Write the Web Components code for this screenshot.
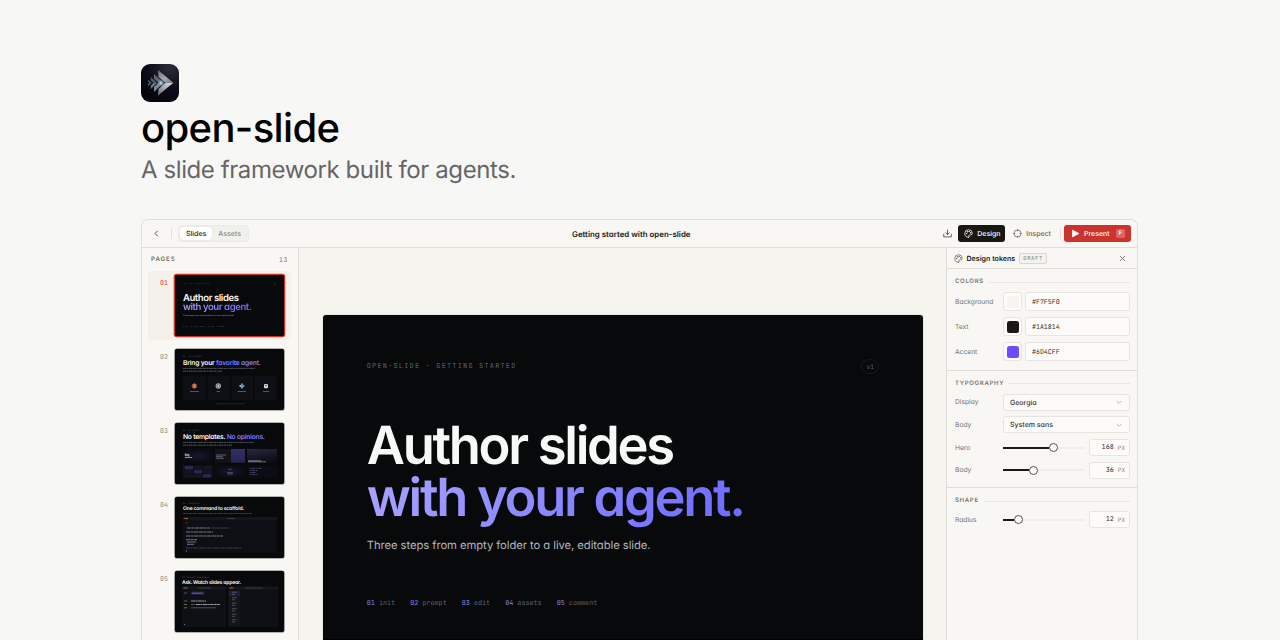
<!DOCTYPE html>
<html lang="en">
<head>
<meta charset="utf-8">
<title>open-slide</title>
<style>
  html, body { margin: 0; height: 100%; overflow: hidden; background: #f7f7f5; }
  body { font-family: Inter, "Liberation Sans", sans-serif; color: #1a1814; text-rendering: geometricPrecision; }
</style>
</head>
<body>
<social-card>
  <brand-mark slot="logo"></brand-mark>
  <span slot="name">open-slide</span>
  <span slot="tagline">A slide framework built for agents.</span>
  <editor-window>
    <editor-bar slot="bar">Getting started with open-slide</editor-bar>
    <page-list slot="pages">
      <page-thumb num="01" active><intro-slide></intro-slide></page-thumb>
      <page-thumb num="02"><svg viewBox="0 0 109 61" width="109" height="61">
        <text x="8" y="8" font-size="1.7" letter-spacing=".3" fill="#666a73">02 · YOUR AGENT</text>
        <text x="8" y="15.8" font-size="6.7" font-weight="600" fill="#f7f8f8" textLength="78">Bring your <tspan fill="#7f7bff">favorite agent.</tspan></text>
        <g stroke="#8a8f98" stroke-width=".7" stroke-dasharray="3 .5 1.6 .5 4 .5" opacity=".75"><path d="M8 19.4h72M8 22.2h39"/></g>
        <g fill="#0e0f14"><path d="M8 26.5h22.7v24.5H8zM32.7 26.5h22v24.5h-22zM56.5 26.5h21.8v24.5H56.5zM80 26.5h22v24.5H80z"/></g>
        <g stroke="#d97757" stroke-width="1.2"><path d="M16.7 37h5.4M19.4 34.3v5.4M17.5 35.1l3.8 3.8M21.3 35.1l-3.8 3.8"/></g>
        <circle cx="43.3" cy="37" r="2.7" fill="#b4b7bb"/><path d="M41.8 36l1.5-1 1.5 1v2l-1.5 1-1.5-1z" fill="none" stroke="#42454a" stroke-width=".6"/>
        <path d="M67 34l1.3 1.7 1.7 1.3-1.7 1.3-1.3 1.7-1.3-1.7-1.7-1.3 1.7-1.3z" fill="#4a9de8"/><path d="M67 34l1 1.8h-2z" fill="#e8574f"/><path d="M64 37l1.8-1v2z" fill="#e8c14a"/><path d="M67 40l1-1.8h-2z" fill="#4cb377"/>
        <rect x="89" y="35" width="4" height="4.2" rx="1" fill="#d6d7d9"/><path d="M90 36.6h2" stroke="#333" stroke-width=".8"/>
        <g stroke="#8a8f98" stroke-width=".7" opacity=".8"><path d="M15 42.5h9M41.5 42.5h3.6M62.5 42.5h8.5M88 42.5h6.3"/></g>
        <path d="M41 54.8h29" stroke="#555963" stroke-width=".6" stroke-dasharray="2 .5 3 .5" opacity=".7"/>
      </svg></page-thumb>
      <page-thumb num="03"><svg viewBox="0 0 109 61" width="109" height="61">
        <defs>
          <linearGradient id="a" x2="0" y2="1"><stop stop-color="#32316a"/><stop offset="1" stop-color="#25244f"/></linearGradient>
          <linearGradient id="b" x2=".3" y2="1"><stop stop-color="#282743"/><stop offset="1" stop-color="#0d0d15"/></linearGradient>
          <radialGradient id="c"><stop stop-color="#181531"/><stop offset="1" stop-color="#0b0c12"/></radialGradient>
        </defs>
        <text x="8" y="8" font-size="1.7" letter-spacing=".3" fill="#666a73">03 · NO LIMITS</text>
        <text x="8" y="15.6" font-size="6.7" font-weight="600" fill="#f7f8f8" textLength="82">No templates. <tspan fill="#7f7bff">No opinions.</tspan></text>
        <g stroke="#8a8f98" stroke-width=".7" stroke-dasharray="3 .5 1.6 .5 4 .5" opacity=".75"><path d="M8 19.4h71M8 22.2h49"/></g>
        <path d="M8 26h29.5v13.7H8z" fill="url(#c)"/><path d="M40 26h16v13.7H40z" fill="#11121a"/><path d="M56 26h14v13.7H56z" fill="url(#a)"/><path d="M72 26h30v13.7H72z" fill="url(#b)"/>
        <text x="9.8" y="32.6" font-size="3" font-weight="600" fill="#eee">Big</text><path d="M10 34.5h7" stroke="#8580ff" stroke-width="1.2"/>
        <path d="M41 32h10M41 33.7h7M41 35.3h8" stroke="#7d8090" stroke-width=".7"/><path d="M73 37.8h13M73 38.8h18" stroke="#b8b8c5" stroke-width=".6"/>
        <path d="M8 42.4h29.5v12.4H8z" fill="#15161d"/><path d="M10 43h8v3.5h-8zM19 47h8v3.5h-8zM28 51h8v3.5h-8z" fill="#272858"/>
        <path d="M8 46.7h29.5M8 50.7h29.5M18.5 42.4v12.4M27.6 42.4v12.4" stroke="#090a0e" stroke-width=".5"/>
        <path d="M40 42.4h30v12.4H40z" fill="url(#c)"/><path d="M53.5 46.3h3M52 49.7h6M52.5 51h5" stroke="#777a88" stroke-width=".6"/>
        <path d="M72 42.4h30v12.4H72z" fill="#0c0d13"/><path d="M75 45.3h12M75 47.5h8M75 49.5h6M75 51.5h8" stroke="#656789" stroke-width=".6" stroke-dasharray="1.5 .6 3 .6"/>
      </svg></page-thumb>
      <page-thumb num="04"><svg viewBox="0 0 109 61" width="109" height="61">
        <text x="8" y="7.2" font-size="1.7" letter-spacing=".3" fill="#666a73">04 · SCAFFOLD</text>
        <text x="8" y="13.3" font-size="5.1" font-weight="600" fill="#f7f8f8" textLength="61">One command to scaffold.</text>
        <path d="M8 16.4h69" stroke="#777b84" stroke-width=".6" stroke-dasharray="3 .5 1.6 .5 4 .5" opacity=".8"/>
        <path d="M8 20h94v35.7H8z" fill="#0e0f14"/><path d="M8 20h94v3H8z" fill="#15161b"/>
        <path d="M9.3 21.5h1.3" stroke="#df554c"/><path d="M10.8 21.5h1" stroke="#caa03c"/><path d="M12 21.5h1" stroke="#3d9f4b"/><path d="M52 21.5h8" stroke="#50535b" stroke-width=".6"/>
        <path d="M11 26h1" stroke="#46785c" stroke-width="1.2"/>
        <g stroke="#a7a9af" stroke-width=".9" stroke-dasharray="4 .5 2.5 .5 5 .5" opacity=".75"><path d="M12 31h23M11 35h27M11 39h37M11 42.7h11"/></g>
        <path d="M36 31h18" stroke="#555963" stroke-width=".6"/><path d="M12 45h9M12 47.3h7" stroke="#7774bb" stroke-width=".9"/>
        <path d="M11 51h56" stroke="#5d606a" stroke-width=".6" stroke-dasharray="4 .5 2 .5"/><path d="M11 54h1" stroke="#a7a9af" stroke-width=".8"/>
      </svg></page-thumb>
      <page-thumb num="05"><svg viewBox="0 0 109 61" width="109" height="61">
        <text x="7" y="6.6" font-size="1.7" letter-spacing=".3" fill="#666a73">05 · PROMPT THE AGENT</text>
        <text x="7" y="12.9" font-size="5.1" font-weight="600" fill="#f7f8f8" textLength="59">Ask. Watch slides appear.</text>
        <path d="M7 15.5h44V56H7zM53 15.5h50V56H53z" fill="#0f1015"/><path d="M7 15.5h44v3H7zM53 15.5h50v3H53z" fill="#16171c"/>
        <path d="M8.5 17h1.3M54.5 17h1.3" stroke="#df554c"/><path d="M10.2 17h1M56.2 17h1" stroke="#caa03c"/><path d="M11.5 17h1M57.5 17h1" stroke="#3d9f4b"/>
        <path d="M23 17h13M70 17h18" stroke="#50535b" stroke-width=".6"/>
        <path d="M16 20.6h13.5v3.2H16z" fill="#222344"/><path d="M17 22.2h11" stroke="#8583da" stroke-width=".7"/><path d="M9 22h3M9 30h3.5" stroke="#666a90" stroke-width=".8"/>
        <path d="M16 30h15M21 33.5h24" stroke="#b9bbc2" stroke-width=".8" stroke-dasharray="4 .4 2 .4"/><path d="M16 33.5h4M16 36.8h25" stroke="#6b6e77" stroke-width=".7"/><path d="M9 33.5h3M9 36.8h3" stroke="#8b7d43" stroke-width=".8"/><path d="M9 53.5h.8" stroke="#8583da" stroke-width="1.2"/>
        <path d="M53.7 19.5H65v36H53.7z" fill="#14151b"/><path d="M54 20h11v5H54z" fill="#1d1e3b"/>
        <path d="M57 21.2h4.5M57 23.3h3M57 26.7h4.5M57 28.8h3M57 32.2h4.5M57 34.3h3M57 37.7h4.5M57 39.8h3M57 43.2h4.5M57 45.3h3M57 48.7h4.5M57 50.8h3" stroke="#73767f" stroke-width=".6"/>
      </svg></page-thumb>
    </page-list>
    <intro-slide slot="stage" large></intro-slide>
    <design-panel slot="panel">
      <token-group label="Colors">
        <color-row label="Background" value="#F7F5F0"></color-row>
        <color-row label="Text" value="#1A1814"></color-row>
        <color-row label="Accent" value="#6D4CFF"></color-row>
      </token-group>
      <token-group label="Typography">
        <select-row label="Display" value="Georgia"></select-row>
        <select-row label="Body" value="System sans"></select-row>
        <range-row label="Hero" value="168" at="50"></range-row>
        <range-row label="Body" value="36" at="30"></range-row>
      </token-group>
      <token-group label="Shape">
        <range-row label="Radius" value="12" at="15"></range-row>
      </token-group>
    </design-panel>
  </editor-window>
</social-card>

<script>
const MONO = '"JetBrains Mono", "Liberation Mono", monospace'

const PALETTE = `<svg viewBox="0 0 24 24" fill="none" stroke="currentColor" stroke-width="2" stroke-linecap="round" stroke-linejoin="round">
  <path d="M12 22a1 1 0 0 1 0-20 10 9 0 0 1 10 9 5 5 0 0 1-5 5h-2.25a1.75 1.75 0 0 0-1.4 2.8l.3.4a1.75 1.75 0 0 1-1.4 2.8z"/>
  <circle cx="13.5" cy="6.5" r=".7"/><circle cx="17.5" cy="10.5" r=".7"/><circle cx="6.5" cy="12.5" r=".7"/><circle cx="8.5" cy="7.5" r=".7"/></svg>`

// registers an element whose shadow root is built from markup(element)
function define (name, markup) {
  window.customElements.define(name, class extends HTMLElement {
    constructor () {
      super()
      this.attachShadow({ mode: 'open' })
    }

    connectedCallback () {
      const template = document.createElement('template')
      template.innerHTML = markup(this)
      this.shadowRoot.replaceChildren(template.content.cloneNode(true))
    }
  })
}

define('social-card', () => `
<style>
:host { display: block; box-sizing: border-box; height: 640px; overflow: hidden; padding: 64px 142px 0 141px; }
h1 { margin: 3px 0 0; font-size: 40px; line-height: 46px; font-weight: 500; letter-spacing: -.65px; color: #000; height: 46px; }
p { margin: 4px 0 0; font-size: 24px; line-height: 30px; height: 30px; letter-spacing: -.41px; color: #666; }
.window { margin-top: 34px; }
</style>
<slot name="logo"></slot>
<h1><slot name="name"></slot></h1>
<p><slot name="tagline"></slot></p>
<div class="window"><slot></slot></div>`)

define('brand-mark', () => `
<style>
:host { display: block; width: 38px; height: 38px; }
svg { display: block; }
</style>
<svg width="38" height="38" viewBox="0 0 38 38">
  <defs>
    <radialGradient id="bg" cx=".75" cy=".1" r=".9"><stop stop-color="#292c38"/><stop offset=".6" stop-color="#0d0e19"/><stop offset="1" stop-color="#04050d"/></radialGradient>
    <linearGradient id="top" x1="0" y1="0" x2="1" y2="1"><stop stop-color="#696b72"/><stop offset=".55" stop-color="#a8aab0"/><stop offset="1" stop-color="#777981"/></linearGradient>
    <linearGradient id="low" x1="1" y1="0" x2="0" y2="1"><stop stop-color="#e2e3e6"/><stop offset=".5" stop-color="#aaacb2"/><stop offset="1" stop-color="#666872"/></linearGradient>
    <radialGradient id="glow"><stop stop-color="#e4f1ff"/><stop offset=".4" stop-color="#9cb5d2" stop-opacity=".7"/><stop offset="1" stop-color="#7890b0" stop-opacity="0"/></radialGradient>
  </defs>
  <rect width="38" height="38" rx="9" fill="url(#bg)"/>
  <path d="M17 6l15.3 12.7h-8L17.5 13z" fill="url(#top)"/><path d="M17 31.5l15.3-12.8h-8L17.5 25z" fill="url(#low)"/>
  <path d="M13 10l9.5 8.7h-5L13 14.8z" fill="#5f6673"/><path d="M13 28l9.5-9.3h-5L13 22.7z" fill="#7d8591"/>
  <path d="M9.8 13l6.2 5.8h-3.5l-2.7-2.4z" fill="#555c69"/><path d="M9.8 25l6.2-6.2h-3.5l-2.7 2.6z" fill="#6f7784"/>
  <path d="M7 15.8l3.8 3-3.8 3.5v-2.2l1.3-1.3L7 17.7z" fill="#505764"/>
  <circle cx="20" cy="19" r="4" fill="url(#glow)"/>
</svg>`)

define('editor-window', () => `
<style>
:host {
  display: flex; flex-direction: column; box-sizing: border-box; width: 997px; height: 421px;
  border: 1px solid #e2e0dc; border-bottom: 0; border-radius: 7px 7px 0 0; background: #f8f7f3; overflow: hidden;
  font-feature-settings: "cv11";
}
.body { display: flex; flex: 1; min-height: 0; }
.stage { flex: 1; background: #f5f4ef; padding: 67px 0 0 24px; }
</style>
<slot name="bar"></slot>
<div class="body">
  <slot name="pages"></slot>
  <div class="stage"><slot name="stage"></slot></div>
  <slot name="panel"></slot>
</div>`)

define('editor-bar', () => `
<style>
:host {
  display: grid; grid-template-columns: 430px auto 1fr; align-items: center; box-sizing: border-box; flex: none;
  height: 28px; padding: 0 6px 0 0; border-bottom: 1px solid #dfddd9; font-size: 7px; font-weight: 500;
}
svg { display: block; width: 9px; height: 9px; flex: none; }
.group { display: flex; align-items: center; }
.start { padding-left: 10px; }
.end { justify-content: flex-end; }
.rule { width: 1px; height: 11px; background: #e2e0db; }
.tabs { display: flex; margin-left: 6px; padding: 1px; border: 1px solid #eceae5; border-radius: 4px; background: #f2f0ea; box-sizing: border-box; height: 17px; color: #8b8780; }
.tabs span { display: flex; align-items: center; padding: 0 6px; border-radius: 3px; }
.tabs .on { background: #fff; color: #1a1814; box-shadow: 0 0 1px #0003; }
.title { font-size: 7.9px; font-weight: 600; }
.button { display: flex; align-items: center; box-sizing: border-box; height: 17px; gap: 4px; border-radius: 3px; }
.dark { background: #1a1611; color: #fff; width: 47px; padding-left: 6px; margin-left: 6px; }
.inspect { padding: 0 9px 0 8px; color: #68645d; }
.present { background: #cc332e; color: #fff; width: 67px; padding-left: 7px; margin-left: 3px; }
kbd { font: 500 6px Inter; background: #dc6661; border-radius: 2px; width: 9px; line-height: 9px; text-align: center; margin-left: 2px; }
</style>
<div class="group start">
  <svg viewBox="0 0 24 24" fill="none" stroke="#4d4943" stroke-width="2.6"><path d="M15 5l-7 7 7 7"/></svg>
  <div class="rule" style="margin-left:10px"></div>
  <div class="tabs"><span class="on">Slides</span><span>Assets</span></div>
</div>
<div class="title"><slot></slot></div>
<div class="group end">
  <svg viewBox="0 0 24 24" fill="none" stroke="#4d4943" stroke-width="2.3" stroke-linecap="round" stroke-linejoin="round"><path d="M12 15V3M7 10l5 5 5-5M2 14v7h20v-7"/></svg>
  <div class="button dark">${PALETTE}Design</div>
  <div class="button inspect"><svg viewBox="0 0 24 24" fill="none" stroke="currentColor" stroke-width="2"><circle cx="12" cy="12" r="9.5"/><path d="M12 1v5M12 18v5M1 12h5M18 12h5"/></svg>Inspect</div>
  <div class="rule"></div>
  <div class="button present"><svg viewBox="0 0 24 24" fill="currentColor" stroke="currentColor" stroke-width="2" stroke-linejoin="round"><path d="M4 3l17 9-17 9z"/></svg>Present<kbd>F</kbd></div>
</div>`)

define('page-list', () => `
<style>
:host { display: flex; flex-direction: column; box-sizing: border-box; flex: none; width: 157px; padding: 0 7px 0 6px; border-right: 1px solid #dfddd9; }
header { display: flex; justify-content: space-between; align-items: center; flex: none; height: 23px; padding: 0 3px; font: 6.4px ${MONO}; color: #77736c; }
b { font: 600 6.2px Inter; letter-spacing: .9px; }
.list { display: flex; flex-direction: column; gap: 5px; }
</style>
<header><b>PAGES</b><span style="letter-spacing:.7px">13</span></header>
<div class="list"><slot></slot></div>`)

define('page-thumb', el => `
<style>
:host { display: flex; flex: none; box-sizing: border-box; height: 69px; padding: 4px 7px 4px 12px; border-radius: 3px; }
:host([active]) { background: #f3f0e9; }
.num { width: 15px; padding-top: 4px; font: 6.6px/8px ${MONO}; color: #8d8982; }
:host([active]) .num { color: #d3443f; }
.frame { width: 109px; height: 61px; border-radius: 2px; overflow: hidden; background: #08090b; box-shadow: 0 0 0 .6px #6b6b69; }
:host([active]) .frame { box-shadow: 0 0 0 1.3px #cc332e; }
</style>
<div class="num">${el.getAttribute('num')}</div>
<div class="frame"><slot></slot></div>`)

// the slide is laid out on a 1920x1080 canvas, --u is the size of one canvas pixel
define('intro-slide', () => `
<style>
:host {
  --u: .0568px; display: flex; flex-direction: column; box-sizing: border-box; width: calc(var(--u) * 1920); height: calc(var(--u) * 1080);
  padding: calc(var(--u) * 136) calc(var(--u) * 140) 0; background: #08090b; color: #f7f8f8; font-feature-settings: "cv11";
}
:host([large]) { --u: .3125px; border-radius: 3px; box-shadow: 0 0 1px #0008; background: linear-gradient(#08090b 96%, #000 0); }
header { display: flex; justify-content: space-between; align-items: center; height: calc(var(--u) * 58); font: calc(var(--u) * 22) ${MONO}; letter-spacing: calc(var(--u) * 3.95); color: #5f626a; }
.badge { display: flex; align-items: center; justify-content: center; width: calc(var(--u) * 58); height: calc(var(--u) * 50); border: calc(var(--u) * 2) solid #17181c; border-radius: 50%; letter-spacing: 0; font-size: calc(var(--u) * 20); box-sizing: border-box; }
h2 { margin: calc(var(--u) * 138) 0 0; font-size: calc(var(--u) * 168); line-height: 1; font-weight: 600; letter-spacing: calc(var(--u) * -7.4); white-space: nowrap; }
h2 span { display: block; width: max-content; }
.accent { padding-bottom: calc(var(--u) * 20); margin-bottom: calc(var(--u) * -20); background: linear-gradient(120deg, #a9a4ff, #6c69ff); background-clip: text; -webkit-background-clip: text; color: transparent; }
p { margin: calc(var(--u) * 44) 0 0; font-size: calc(var(--u) * 36); line-height: calc(var(--u) * 50); letter-spacing: calc(var(--u) * -.2); color: #b4b7bd; white-space: nowrap; }
footer { display: flex; gap: calc(var(--u) * 48); margin-top: calc(var(--u) * 146); font: calc(var(--u) * 21.7) ${MONO}; color: #5f626a; white-space: nowrap; }
i { font-style: normal; color: #8c87e8; }
</style>
<header><span>OPEN-SLIDE · GETTING STARTED</span><span class="badge">v1</span></header>
<h2><span>Author slides</span><span class="accent">with your agent.</span></h2>
<p>Three steps from empty folder to a live, editable slide.</p>
<footer><span><i>01</i> init</span><span><i>02</i> prompt</span><span><i>03</i> edit</span><span><i>04</i> assets</span><span><i>05</i> comment</span></footer>`)

define('design-panel', () => `
<style>
:host { display: block; box-sizing: border-box; flex: none; width: 191px; border-left: 1px solid #dfddd9; background: #f8f7f3; }
header { display: flex; align-items: center; box-sizing: border-box; height: 21px; padding: 0 10px 0 6.5px; border-bottom: 1px solid #dfddd9; color: #68645d; }
svg { width: 9px; height: 9px; }
b { margin: 0 4px 0 4px; font-size: 7.1px; font-weight: 600; color: #1a1814; }
.tag { padding: 0 3px; border: 1px solid #d9d6d0; border-radius: 2px; font: 5.6px/9px ${MONO}; letter-spacing: .6px; color: #87837c; background: #f4f2ed; }
.close { margin-left: auto; }
</style>
<header>${PALETTE}<b>Design tokens</b><span class="tag">DRAFT</span>
  <svg class="close" viewBox="0 0 24 24" fill="none" stroke="currentColor" stroke-width="2.2"><path d="M5 5l14 14M19 5L5 19"/></svg></header>
<slot></slot>`)

define('token-group', el => `
<style>
:host { display: block; padding: 9px 7px 8.5px 8px; border-bottom: 1px solid #dfddd9; }
:host(:last-child) { border: 0; }
h3 { display: flex; align-items: center; gap: 5px; margin: 0 0 6px; font-size: 6px; line-height: 8px; font-weight: 600; letter-spacing: .7px; text-transform: uppercase; color: #77736c; }
h3::after { content: ""; flex: 1; height: 1px; background: #e9e7e2; }
.rows { display: flex; flex-direction: column; gap: 5.7px; }
</style>
<h3>${el.getAttribute('label')}</h3>
<div class="rows"><slot></slot></div>`)

const ROW = `
:host { display: flex; align-items: center; font-size: 6.7px; color: #77736c; }
label { width: 48px; flex: none; }
.field { display: flex; align-items: center; box-sizing: border-box; height: 17px; border: 1px solid #e7e5e0; border-radius: 3px; background: #fcfbf9; color: #35312b; }`

define('color-row', el => `
<style>${ROW}
.field { height: 19.3px; }
.swatch { width: 19px; justify-content: center; margin-right: 3px; }
.swatch i { width: 12px; height: 12px; border-radius: 2.5px; background: ${el.getAttribute('value')}; }
.hex { flex: 1; padding-left: 6px; font: 6.6px ${MONO}; }
</style>
<label>${el.getAttribute('label')}</label>
<div class="field swatch"><i></i></div>
<div class="field hex">${el.getAttribute('value')}</div>`)

define('select-row', el => `
<style>${ROW}
.field { flex: 1; justify-content: space-between; padding: 0 6px; font-size: 7px; font-weight: 500; }
svg { width: 8px; height: 8px; }
</style>
<label>${el.getAttribute('label')}</label>
<div class="field">${el.getAttribute('value')}<svg viewBox="0 0 24 24" fill="none" stroke="#aaa69f" stroke-width="2.4"><path d="M5 9l7 7 7-7"/></svg></div>`)

define('range-row', el => `
<style>${ROW}
.track { display: flex; align-items: center; width: 82px; height: 2px; margin-right: 3.5px; border-radius: 1px; background: #f0eee8; }
.fill { width: calc(${el.getAttribute('at')}px - 4.5px); height: 2px; background: #1a1814; }
.thumb { box-sizing: border-box; width: 9px; height: 9px; border: 1px solid #55514b; border-radius: 50%; background: #fff; }
.field { flex: 1; justify-content: flex-end; gap: 4px; padding-right: 4px; font: 6.8px ${MONO}; }
small { font-size: 6px; color: #8b8780; }
</style>
<label>${el.getAttribute('label')}</label>
<div class="track"><div class="fill"></div><div class="thumb"></div></div>
<div class="field">${el.getAttribute('value')}<small>PX</small></div>`)
</script>
</body>
</html>
